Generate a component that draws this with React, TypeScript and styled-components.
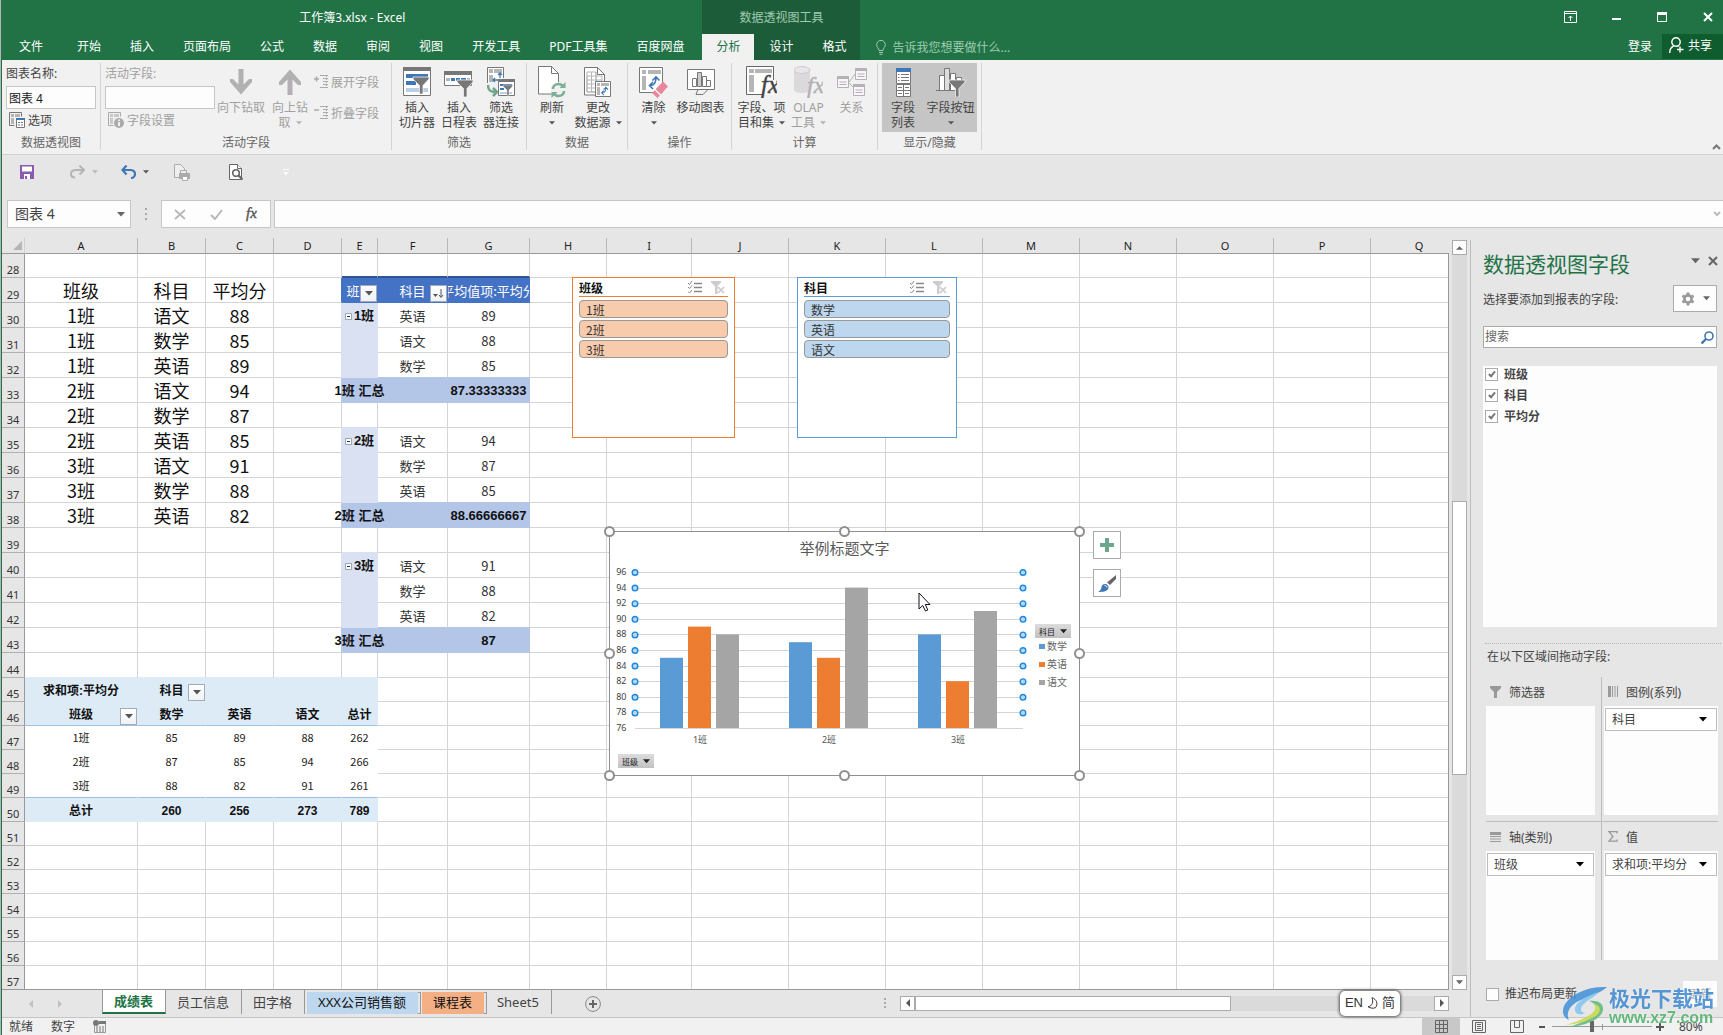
import React from 'react';
import styled, { createGlobalStyle, css } from 'styled-components';

const UI = '"Noto Sans", "Noto Sans CJK SC", sans-serif';
const SHEET = '"Noto Sans CJK SC", sans-serif';
const GREEN = '#217346';

const Global = createGlobalStyle`
  *, *::before, *::after { box-sizing: border-box; }
  body { margin: 0; font-family: ${UI}; font-size: 12px; color: #444; background: #e6e6e6; }
  button, input, select { font: inherit; color: inherit; margin: 0; padding: 0; border: 0; background: none; border-radius: 0; outline: none; }
  button { cursor: pointer; }
  svg { display: block; flex: none; }
`;

/* ---------- frame ---------- */

const Window = styled.div`
  display: flex;
  flex-direction: column;
  height: 100vh;
  padding-left: 1px;
  border-left: 1px solid #b5b5b5;
  background: ${GREEN};
  overflow: hidden;
`;

const Header = styled.header`
  display: flex;
  height: 60px;
  flex: none;
  color: #fff;
`;

const HeaderPart = styled.div<{ $dark?: boolean; $grow?: boolean }>`
  display: flex;
  flex-direction: column;
  background: ${p => (p.$dark ? '#1d5c39' : GREEN)};
  color: ${p => (p.$dark ? '#9fcbb1' : '#fff')};
  ${p => p.$grow && 'flex: 1;'}
`;

const TitleRow = styled.div<{ $end?: boolean }>`
  display: flex;
  align-items: center;
  justify-content: ${p => (p.$end ? 'flex-end' : 'center')};
  gap: 16px;
  height: 34px;
`;

const WinButton = styled.button`
  display: flex;
  align-items: center;
  justify-content: center;
  width: 30px;
  height: 30px;
`;

const TabRow = styled.nav<{ $pad?: string }>`
  display: flex;
  gap: 1px;
  height: 26px;
  padding: ${p => p.$pad || '0'};
`;

const Tab = styled.button<{ $on?: boolean; $file?: boolean }>`
  padding: 0 14px;
  line-height: 24px;
  height: 26px;
  white-space: nowrap;
  color: ${p => (p.$on ? GREEN : '#fff')};
  background: ${p => (p.$on ? '#f1f1f1' : 'transparent')};
  margin-right: ${p => (p.$file ? '5px' : '0')};
`;

const SignIn = styled.button`
  height: 26px;
  padding: 0 9px;
  line-height: 24px;
`;

const TellMe = styled.button`
  display: flex;
  align-items: center;
  gap: 6px;
  height: 26px;
  color: #9fcbb1;
`;

const Share = styled.button`
  display: flex;
  align-items: center;
  gap: 4px;
  width: 61px;
  height: 25px;
  padding: 0 0 3px 7px;
  background: #0f5c2f;
`;

const Push = styled.div`
  flex: 1;
`;

/* ---------- ribbon ---------- */

const Ribbon = styled.section`
  position: relative;
  display: flex;
  flex: none;
  height: 95px;
  padding: 3px 0 4px;
  background: #f1f1f1;
  border-bottom: 1px solid #d2d2d2;
`;

const GroupBox = styled.div<{ $w: number }>`
  display: flex;
  flex-direction: column;
  width: ${p => p.$w}px;
  border-right: 1px solid #d4d4d4;
`;

const GroupBody = styled.div<{ $start?: boolean }>`
  display: flex;
  justify-content: ${p => (p.$start ? 'flex-start' : 'center')};
  padding-left: ${p => (p.$start ? '4px' : '0')};
  height: 74px;
`;

const GroupLabel = styled.div`
  text-align: center;
  line-height: 14px;
  color: #666;
`;

const BigBtn = styled.button<{ $w: number; $sel?: boolean; $off?: boolean }>`
  display: flex;
  flex-direction: column;
  align-items: center;
  width: ${p => p.$w}px;
  height: 69px;
  padding-top: 4px;
  background: ${p => (p.$sel ? '#c5c5c5' : 'transparent')};
  color: ${p => (p.$off ? '#a0a0a0' : '#444')};
  line-height: 15px;
  white-space: nowrap;
`;

const IconSlot = styled.span`
  display: flex;
  align-items: center;
  justify-content: center;
  height: 30px;
  margin-bottom: 3px;
`;

const Line = styled.span`
  display: flex;
  align-items: center;
  gap: 5px;
  height: 15px;
`;

const FieldCol = styled.div<{ $w: number; $off?: boolean }>`
  display: flex;
  flex-direction: column;
  width: ${p => p.$w}px;
  color: ${p => (p.$off ? '#a0a0a0' : '#444')};
  label { line-height: 21px; }
  input {
    width: 100%;
    height: 23px;
    margin-top: 2px;
    padding-left: 2px;
    border: 1px solid #c6c6c6;
    background: #fdfdfd;
    color: #222;
  }
`;

const SmallBtn = styled.button<{ $off?: boolean }>`
  display: flex;
  align-items: center;
  gap: 3px;
  height: 22px;
  padding-left: 3px;
  color: ${p => (p.$off ? '#a0a0a0' : '#444')};
`;

const SmallCol = styled.div`
  display: flex;
  flex-direction: column;
  gap: 9px;
  padding: 8px 0 0 1px;
  button { padding-left: 0; }
`;

const Collapse = styled.button`
  position: absolute;
  right: 2px;
  bottom: 3px;
`;

/* ---------- quick access and formula bar ---------- */

const Quick = styled.div`
  display: grid;
  grid-template-columns: 50px 51px 54px 54px 50px 20px;
  align-items: center;
  flex: none;
  height: 45px;
  padding: 0 0 11px 15px;
  background: #e6e6e6;
`;

const QuickItem = styled.div`
  display: flex;
  gap: 2px;
`;

const IconBtn = styled.button<{ $w?: number }>`
  display: flex;
  align-items: center;
  justify-content: center;
  width: ${p => p.$w || 20}px;
  height: 20px;
`;

const FormulaRow = styled.div`
  display: flex;
  flex: none;
  height: 28px;
  padding-left: 5px;
  background: #e6e6e6;
`;

const Boxed = styled.div<{ $w?: number }>`
  position: relative;
  display: flex;
  align-items: center;
  width: ${p => (p.$w ? `${p.$w}px` : 'auto')};
  flex: ${p => (p.$w ? 'none' : '1')};
  border: 1px solid #c6c6c6;
  background: #fdfdfd;
  input { width: 100%; height: 100%; padding: 0 0 2px 7px; font-size: 14px; }
`;

const FormulaBox = styled(Boxed)`
  margin-left: 3px;
  border-right: 0;
`;

const CaretOver = styled.span<{ $right: number }>`
  position: absolute;
  right: ${p => p.$right}px;
  top: 0;
  bottom: 0;
  display: flex;
  align-items: center;
  pointer-events: none;
`;

const Dots = styled.div`
  display: flex;
  align-items: center;
  justify-content: center;
  width: 30px;
`;

/* ---------- body ---------- */

const Body = styled.div`
  display: flex;
  flex: 1;
  min-height: 0;
  background: #e6e6e6;
`;

const Left = styled.div`
  display: flex;
  flex-direction: column;
  flex: 1;
  min-width: 0;
`;

const SheetRow = styled.div`
  display: flex;
  flex: 1;
  min-height: 0;
`;

const SheetView = styled.main`
  position: relative;
  flex: 1;
  min-width: 0;
  overflow: hidden;
  font-family: ${SHEET};
  border-bottom: 1px solid #999;
  &::after {
    content: '';
    position: absolute;
    right: 0;
    top: 25px;
    bottom: 0;
    width: 1px;
    background: #999;
  }
`;

const Grid = styled.table<{ $w: number }>`
  table-layout: fixed;
  width: ${p => p.$w}px;
  margin-top: 10px;
  border-collapse: separate;
  border-spacing: 0;
  td, th { padding: 0; }
`;

const ColHead = styled.th`
  height: 16px;
  font-size: 11px;
  line-height: 15px;
  font-weight: 400;
  color: #222;
  border-bottom: 1px solid #999;
  border-right: 1px solid #b8b8b8;
  font-family: ${UI};
`;

const Corner = styled(ColHead)`
  border-right-color: #d0d0d0;
  svg { margin-left: 11px; }
`;

const RowHead = styled.th<{ $h: number }>`
  height: ${p => p.$h}px;
  vertical-align: bottom;
  text-align: center;
  font-family: ${UI};
  font-size: 11px;
  font-weight: 400;
  line-height: 14px;
  color: #333;
  background: #e6e6e6;
  border-bottom: 1px solid #b0b0b0;
  border-right: 1px solid #999;
`;

const Cell = styled.td<{ $bg: string; $r: string; $b: string; $bw: number }>`
  position: relative;
  background: ${p => p.$bg};
  border-right: 1px solid ${p => p.$r};
  border-bottom: ${p => p.$bw}px solid ${p => p.$b};
`;

type TextKind = 'big' | 'mid' | 'midBold' | 'small' | 'smallBold' | 'head';

const kinds: Record<TextKind, ReturnType<typeof css>> = {
  big: css`font-size: 18px; color: #111;`,
  mid: css`padding-top: 2px; font-size: 13px; color: #333;`,
  midBold: css`padding-top: 2px; font-family: "Liberation Sans", "Noto Sans CJK SC", sans-serif; font-size: 13px; font-weight: 700; color: #111;`,
  small: css`padding-bottom: 2px; font-size: 11px; color: #222;`,
  smallBold: css`padding-top: 2px; font-family: "Liberation Sans", "Noto Sans CJK SC", sans-serif; font-size: 12px; font-weight: 700; color: #111;`,
  head: css`padding-top: 2px; font-size: 13px; color: #fff;`,
};

const CellText = styled.div<{ $kind: TextKind; $clip?: boolean }>`
  position: relative;
  z-index: 1;
  display: flex;
  align-items: center;
  justify-content: center;
  gap: 2px;
  height: 22px;
  line-height: 20px;
  white-space: nowrap;
  overflow: ${p => (p.$clip ? 'hidden' : 'visible')};
  ${p => kinds[p.$kind]}
`;

const FilterBtn = styled.button`
  position: absolute;
  z-index: 2;
  right: 0;
  bottom: 0;
  display: flex;
  align-items: center;
  justify-content: center;
  width: 17px;
  height: 17px;
  border: 1px solid #a3abb8;
  background: linear-gradient(#fff, #f0f2f5);
`;

/* ---------- floating objects ---------- */

const Slicer = styled.section<{ $x: number; $w: number; $c: string }>`
  position: absolute;
  z-index: 3;
  left: ${p => p.$x}px;
  top: 49px;
  width: ${p => p.$w}px;
  height: 161px;
  padding: 0 6px;
  border: 1px solid ${p => p.$c};
  background: #fff;
`;

const SlicerHead = styled.div<{ $c: string }>`
  display: flex;
  align-items: center;
  height: 19px;
  margin-bottom: 3px;
  font-size: 12px;
  font-weight: 700;
  color: #111;
  border-bottom: 1px solid ${p => p.$c};
  span { flex: 1; }
`;

const SlicerItem = styled.button<{ $bg: string }>`
  display: block;
  width: 100%;
  height: 18px;
  margin-bottom: 2px;
  padding-left: 6px;
  text-align: left;
  line-height: 15px;
  color: #333;
  background: ${p => p.$bg};
  border: 1px solid #999;
  border-radius: 4px;
`;

const ChartFrame = styled.section`
  position: absolute;
  z-index: 3;
  left: 607px;
  top: 303px;
  width: 471px;
  height: 245px;
  border: 1px solid #8f8f8f;
  background: #fff;
  font-family: ${UI};
`;

const ChartSvg = styled.svg`
  position: absolute;
  left: -1px;
  top: -1px;
  overflow: visible;
`;

const ChartTitle = styled.h2`
  margin: 7px 0 0;
  font-size: 15px;
  line-height: 18px;
  font-weight: 400;
  text-align: center;
  color: #595959;
`;

const FieldBtn = styled.button<{ $x: number; $y: number }>`
  position: absolute;
  left: ${p => p.$x}px;
  top: ${p => p.$y}px;
  display: flex;
  align-items: center;
  justify-content: space-between;
  width: 36px;
  height: 14px;
  padding: 0 4px;
  font-size: 8px;
  color: #222;
  background: linear-gradient(#dcdcdc, #c2c2c2);
`;

const ChartTool = styled.button<{ $y: number }>`
  position: absolute;
  z-index: 3;
  left: 1091px;
  top: ${p => p.$y}px;
  display: flex;
  align-items: center;
  justify-content: center;
  width: 28px;
  height: 28px;
  background: #fff;
  border: 1px solid #ababab;
`;

const Pointer = styled.svg`
  position: absolute;
  z-index: 4;
  left: 916px;
  top: 364px;
`;

/* ---------- scroll bars ---------- */

const VScroll = styled.div`
  display: flex;
  flex-direction: column;
  width: 15px;
  margin: 12px 3px 0;
  background: #dadada;
`;

const ScrollBtn = styled.button`
  display: flex;
  align-items: center;
  justify-content: center;
  flex: none;
  width: 15px;
  height: 15px;
  background: #fdfdfd;
  border: 1px solid #ababab;
`;

const Span = styled.div<{ $n: number; $thumb?: boolean }>`
  flex: ${p => p.$n};
  ${p => p.$thumb && 'background: #fff; border: 1px solid #ababab;'}
`;

const HScroll = styled.div`
  position: relative;
  display: flex;
  width: 549px;
  height: 15px;
  margin-right: 21px;
  background: #dadada;
`;

const Ime = styled.div`
  position: absolute;
  right: 49px;
  top: -5px;
  display: flex;
  align-items: center;
  justify-content: center;
  gap: 4px;
  width: 60px;
  height: 25px;
  font-family: "Liberation Sans", "Noto Sans CJK SC", sans-serif;
  font-size: 13px;
  line-height: 16px;
  color: #333;
  background: #fff;
  border-radius: 5px;
  box-shadow: 0 0 3px 1px #555;
`;

/* ---------- sheet tabs and status bar ---------- */

const TabBar = styled.div`
  display: flex;
  flex: none;
  height: 27px;
  font-size: 13px;
`;

const TabNav = styled.div`
  display: flex;
  align-items: center;
  gap: 9px;
  width: 100px;
  padding-left: 19px;
`;

const SheetTab = styled.button<{ $on?: boolean; $bg?: string }>`
  height: 24px;
  padding: 0 12px 1px 11px;
  line-height: 20px;
  white-space: nowrap;
  color: #444;
  border-right: 1px solid #999;
  ${p => p.$bg && css`
    height: 22px;
    margin: 2px 2px 0 2px;
    line-height: 17px;
    color: #111;
    background: ${p.$bg};
    border-right: 0;
    box-shadow: 3px 0 0 -1px #e6e6e6, 3px 0 0 0 #999;
  `}
  ${p => p.$on && css`
    color: ${GREEN};
    font-weight: 700;
    background: #fff;
    border-left: 1px solid #999;
    border-bottom: 2px solid ${GREEN};
  `}
`;

const AddTab = styled.button`
  margin-left: 33px;
`;

const ScrollArea = styled.div`
  display: flex;
  align-items: center;
  height: 26px;
`;

const Status = styled.footer`
  display: flex;
  align-items: center;
  flex: none;
  height: 18px;
  padding-left: 7px;
  background: #f1f1f1;
  border-top: 1px solid #c6c6c6;
  line-height: 16px;
`;

const StatusText = styled.span`
  margin-right: 18px;
`;

const ViewBtn = styled.button<{ $on?: boolean }>`
  display: flex;
  align-items: center;
  justify-content: center;
  width: 38px;
  height: 17px;
  background: ${p => (p.$on ? '#c8c8c8' : 'transparent')};
`;

const Zoom = styled.input`
  appearance: none;
  width: 100px;
  height: 12px;
  margin: 0 4px;
  background: linear-gradient(#999, #999) 0 50% / 100% 1px no-repeat, linear-gradient(#999, #999) 50% 50% / 1px 6px no-repeat;
  &::-webkit-slider-thumb {
    appearance: none;
    width: 4px;
    height: 11px;
    background: #666;
  }
`;

const Percent = styled.span`
  width: 59px;
  padding-left: 15px;
`;

/* ---------- field pane ---------- */

const Pane = styled.aside`
  display: flex;
  flex-direction: column;
  width: 253px;
  margin-top: 12px;
  padding: 11px 6px 10px 12px;
  border-left: 1px solid #bdbdbd;
`;

const PaneTop = styled.div`
  display: flex;
  align-items: flex-start;
  gap: 8px;
  height: 27px;
  margin-right: -1px;
  h2 { flex: 1; margin: 0; font-size: 21px; line-height: 26px; font-weight: 400; color: ${GREEN}; white-space: nowrap; }
`;

const PaneRow = styled.div`
  display: flex;
  align-items: center;
  justify-content: space-between;
  height: 27px;
  margin-top: 7px;
`;

const GearBtn = styled.button`
  display: flex;
  align-items: center;
  justify-content: center;
  gap: 8px;
  width: 44px;
  height: 27px;
  border: 1px solid #ababab;
  background: #fdfdfd;
`;

const Search = styled.label`
  display: flex;
  align-items: center;
  height: 22px;
  margin-top: 14px;
  padding-right: 2px;
  border: 1px solid #ababab;
  background: #fff;
  input { flex: 1; min-width: 0; height: 20px; padding: 0 0 2px 1px; }
  input::placeholder { color: #666; opacity: 1; }
`;

const FieldList = styled.div`
  flex: 1;
  min-height: 70px;
  margin-top: 18px;
  padding: 0 2px;
  background: #fdfdfd;
`;

const Check = styled.label<{ $bold?: boolean }>`
  display: flex;
  align-items: center;
  gap: 6px;
  height: ${p => (p.$bold ? '21px' : '26px')};
  padding-bottom: ${p => (p.$bold ? '4px' : '0')};
  font-weight: ${p => (p.$bold ? 700 : 400)};
  line-height: 16px;
  input {
    appearance: none;
    position: relative;
    width: 13px;
    height: 13px;
    background: #fdfdfd;
    border: 1px solid #ababab;
  }
  input:checked::after {
    content: '';
    position: absolute;
    left: 4px;
    top: 1px;
    width: 4px;
    height: 7px;
    border: solid #777;
    border-width: 0 2px 2px 0;
    transform: rotate(40deg);
  }
`;

const DragLabel = styled.div`
  margin: 16px -4px 0 2px;
  padding: 4px 0 0 2px;
  height: 34px;
  line-height: 18px;
  border-top: 1px dotted #b5b5b5;
`;

const Zones = styled.div`
  display: grid;
  grid-template-columns: 1fr 1fr;
  margin: 0 -1px 0 3px;
`;

const Zone = styled.section<{ $right?: boolean; $last?: boolean }>`
  padding: ${p => (p.$right ? '0 0 0 2px' : '0 6px 0 0')};
  padding-bottom: ${p => (p.$last ? '0' : '6px')};
  border-right: ${p => (p.$right ? '0' : '1px solid #bdbdbd')};
  border-bottom: ${p => (p.$last ? '0' : '1px solid #bdbdbd')};
`;

const ZoneHead = styled.div`
  display: flex;
  align-items: center;
  gap: 8px;
  height: 29px;
  padding-left: 4px;
`;

const ZoneBox = styled.div`
  height: 109px;
  padding: 2px 1px;
  background: #fdfdfd;
`;

const Pick = styled.div`
  position: relative;
  height: 23px;
  border: 1px solid #bdbdbd;
  background: #fff;
  select { appearance: none; width: 100%; height: 21px; padding-left: 6px; line-height: 21px; }
`;

const PaneFoot = styled.div`
  display: flex;
  align-items: center;
  justify-content: space-between;
  height: 26px;
  margin: 21px 0 0 3px;
`;

const UpdateBtn = styled.button`
  width: 34px;
  height: 26px;
  color: #b0b0b0;
  background: #fdfdfd;
`;

const Watermark = styled.div`
  position: fixed;
  right: 9px;
  bottom: 7px;
  display: flex;
  align-items: center;
  gap: 2px;
  pointer-events: none;
  opacity: 0.85;
`;

const MarkText = styled.div`
  font-weight: 700;
  text-shadow: 0 0 2px #fff;
  white-space: nowrap;
  div { font-size: 21px; line-height: 22px; color: #3c86cf; }
  p { margin: 0; font-family: "Liberation Sans", sans-serif; font-size: 16px; line-height: 18px; color: #4caf6a; }
`;

/* ---------- icons ---------- */

const Caret = ({ c = '#666', w = 6 }: { c?: string; w?: number }) => (
  <svg width={w} height={Math.ceil(w / 2) + 1} viewBox="0 0 8 5"><path d="M0 0h8L4 4.6z" fill={c} /></svg>
);

const Arrow = ({ up }: { up?: boolean }) => (
  <svg width="22" height="26" viewBox="0 0 22 26">
    <path transform={up ? 'rotate(180 11 13)' : undefined} d="M8.5 0h5v15.5l5.5-5.5h3v3L11 25.500 0 13v-3h3l5.500 5.500z" fill="#b3b0b3" />
  </svg>
);

const TreeIcon = ({ plus }: { plus?: boolean }) => (
  <svg width="14" height="14" viewBox="0 0 14 14" stroke="#aaa" fill="none">
    <path d={plus ? 'M0 4h5M2.500 1.500v5' : 'M0 4h5'} strokeWidth="1.500" />
    <path d="M6 .5h8M9 3.500h5M9 6.500h5M9 9.500h5M6 12.500h8" />
    <path d="M12.500 1v12" strokeDasharray="1 2" />
  </svg>
);

const OptionsIcon = ({ info }: { info?: boolean }) => (
  <svg width="16" height="16" viewBox="0 0 16 16" fill="none">
    <path d="M.5.500h12v4M.5.500v13h5" stroke={info ? '#aaa' : '#777'} />
    <path d="M2 2h3v3H2zM6 2h5v3H6zM2 6h3v6H2z" fill={info ? '#c8c8c8' : '#b5b5b5'} />
    {info ? (
      <>
        <circle cx="11" cy="11" r="5" fill="#aaa" />
        <path d="M11 7.500v1.500M11 10v4" stroke="#fff" strokeWidth="1.600" />
      </>
    ) : (
      <>
        <path d="M7.500 6.500h8v9h-8z" fill="#fff" stroke="#777" />
        <path d="M7 6h9v2H7z" fill="#3f76b5" />
        <path d="M9 10.500h2M12 10.500h2M9 13h2M12 13h2" stroke="#777" />
      </>
    )}
  </svg>
);

const Funnel = ({ x = 0, y = 0, c = '#777', k = 1 }: { x?: number; y?: number; c?: string; k?: number }) => (
  <path transform={`translate(${x} ${y}) scale(${k})`} d="M0 0h16v2L10 8.500V17H6.500V8.500L0 2z" fill={c} stroke="#f1f1f1" strokeWidth=".8" />
);

const SlicerIcon = () => (
  <svg width="28" height="30" viewBox="0 0 28 30">
    <path d="M.5.500h27v28H.5z" fill="#fff" stroke="#777" />
    <path d="M0 0h28v4H0z" fill="#777" />
    <path d="M3 7h22v4H3zM3 14h10v4H3z" fill="#3f76b5" />
    <path d="M3 21h22v4H3z" fill="#b9cfe8" />
    <Funnel x={10} y={10} />
  </svg>
);

const TimelineIcon = () => (
  <svg width="30" height="30" viewBox="0 0 30 30">
    <path d="M.5 4.500h27v14H.5z" fill="#fff" stroke="#777" />
    <path d="M0 4h28v4H0z" fill="#777" />
    <path d="M2 11h4v3H2zM23 11h3v3h-3z" fill="#b5b5b5" />
    <path d="M7 11h4v3H7zM12 11h4v3h-4zM17 11h5v3h-5z" fill="#3f76b5" />
    <Funnel x={13} y={13} />
  </svg>
);

const LinkIcon = () => (
  <svg width="28" height="30" viewBox="0 0 28 30" fill="none">
    <path d="M.5 16V.500h16V11" fill="#fff" stroke="#777" />
    <path d="M2 2h4v4H2zM7 2h8v4H7zM2 8h4v7H2z" fill="#b5b5b5" />
    <path d="M13 6v5M11 8l2-2 2 2M6 13h5M8 11l-2 2 2 2" stroke="#3f76b5" strokeWidth="1.300" />
    <path d="M1 18c0 5 2 7 7 7M6 21l4 4-4 4" stroke="#6fa58d" strokeWidth="2.500" />
    <path d="M11.500 12.500h16v16h-16z" fill="#fff" stroke="#777" />
    <path d="M11 12h17v3H11z" fill="#777" />
    <path d="M13 17h12v2H13zM13 21h4v2h-4z" fill="#3f76b5" />
    <path d="M13 25h12v2H13z" fill="#b9cfe8" />
    <Funnel x={16} y={18} k={0.6} />
  </svg>
);

const RefreshIcon = () => (
  <svg width="28" height="32" viewBox="0 0 28 32" fill="none">
    <path d="M.5.500h13l7 7V28H.5z" fill="#fff" stroke="#777" />
    <path d="M13.500.500v7h7" stroke="#777" />
    <circle cx="20.500" cy="24" r="8" fill="#f1f1f1" />
    <path d="M15 23c0-3 2.500-5 5.500-5 2 0 3.500 1 4.500 2.500M26 25c0 3-2.500 5-5.500 5-2 0-3.500-1-4.500-2.500" stroke="#7caf97" strokeWidth="2.600" />
    <path d="M27.500 16v6h-6zM13.500 32v-6h6z" fill="#7caf97" />
  </svg>
);

const SwapArrows = ({ x, y, k = 1 }: { x: number; y: number; k?: number }) => (
  <path transform={`translate(${x} ${y}) scale(${k})`} d="M3 10.500c4 0 6-2 6-8M6 7L2.500 10.500 6 14M5.500 5.500L9 2l3.500 3.500" fill="none" stroke="#3f76b5" strokeWidth="1.600" />
);

const SourceIcon = () => (
  <svg width="28" height="31" viewBox="0 0 28 31" fill="none">
    <path d="M.5.500h13l7 7V28H.5z" fill="#fff" stroke="#777" />
    <path d="M13.500.500v7h7" stroke="#777" />
    <path d="M3 5h9v20H3zM3 9h15v16H3zM3 13h15M3 17h15M3 21h15M7.500 5v20M12 5v20" stroke="#b5b5b5" />
    <path d="M11.500 14.500h15v15h-15z" fill="#fff" stroke="#777" />
    <path d="M13 16h3v3h-3zM17 16h8v3h-8zM13 20h3v8h-3z" fill="#b5b5b5" />
    <SwapArrows x={16} y={19} k={0.65} />
  </svg>
);

const ClearIcon = () => (
  <svg width="29" height="31" viewBox="0 0 29 31">
    <path d="M.5.500h23v25H.5z" fill="#fff" stroke="#777" />
    <path d="M3 3h4v4H3zM9 3h13v4H9zM3 9h4v14H3z" fill="#b5b5b5" />
    <SwapArrows x={8} y={8} />
    <path d="M24 14.500l5 5L18.500 31l-5.500-5z" fill="#e8869a" />
    <path d="M15.500 22l6 6" stroke="#fff" strokeWidth="1.200" />
  </svg>
);

const MoveChartIcon = () => (
  <svg width="28" height="28" viewBox="0 0 28 28" fill="none">
    <path d="M.5 1.500h27v20H.500z" fill="#fff" stroke="#777" />
    <path d="M5.500 10.500h4v8h-4zM15.500 8.500h4v10h-4zM19.500 12.500h4v6h-4z" fill="#fff" stroke="#777" />
    <path d="M10.500 4.500h4v14h-4z" fill="#ccc" stroke="#777" />
    <path d="M11 21.500l-2 5h7l5-5z" fill="#f1f1f1" stroke="#777" />
  </svg>
);

const Fx = ({ x, y, size, c }: { x: number; y: number; size: number; c: string }) => (
  <text x={x} y={y} fontFamily="Liberation Serif, serif" fontStyle="italic" fontSize={size} fill={c} stroke={c} strokeWidth=".4">fx</text>
);

const CalcIcon = () => (
  <svg width="31" height="32" viewBox="0 0 31 32">
    <path d="M.5.500h27v28H.5z" fill="#fff" stroke="#666" />
    <path d="M3 3h5v4H3zM9 3h17v4H9zM3 9h5v17H3z" fill="#b5b5b5" />
    <path d="M17 14h14v15H17z" fill="#f8f8f8" />
    <Fx x={15} y={27} size={25} c="#444" />
  </svg>
);

const OlapIcon = () => (
  <svg width="29" height="32" viewBox="0 0 29 32">
    <path d="M0 4v20c0 4 16 4 16 0V4z" fill="#dcd9dc" />
    <ellipse cx="8" cy="4" rx="8" ry="3.500" fill="#e8e6e8" stroke="#cfcccf" />
    <Fx x={13} y={27} size={24} c="#b3b0b3" />
  </svg>
);

const RelIcon = () => (
  <svg width="30" height="30" viewBox="0 0 30 30" fill="#faf5fb" stroke="#b5b2b5">
    <path d="M12 15l7-9M12 16l5 5" fill="none" />
    {[[0.5, 9.5], [18.5, 1.5], [16.5, 17.5]].map(([x, y]) => (
      <g key={x}>
        <path d={`M${x} ${y}h11v11h-11z`} />
        <path d={`M${x} ${y + 1}h11`} strokeWidth="3" />
        <path d={`M${x + 2} ${y + 5.500}h7M${x + 2} ${y + 8}h7`} />
      </g>
    ))}
  </svg>
);

const ListIcon = () => (
  <svg width="15" height="29" viewBox="0 0 15 29" fill="#fff" stroke="#777">
    <path d="M.5.500h14v15H.5zM.5 16.500h14v12H.5z" />
    <path d="M7.500 17v11M1 22.500h13M2 19.500h4M9 19.500h4M2 25.500h4M9 25.500h4M5 6.500h8M5 9.500h8M5 12.500h8M2 6.500h1.500M2 9.500h1.500M2 12.500h1.500" />
    <path d="M0 0h15v4H0z" fill="#3f76b5" stroke="none" />
  </svg>
);

const FieldBtnIcon = () => (
  <svg width="30" height="30" viewBox="0 0 30 30" fill="#fff" stroke="#777">
    <path d="M0 23.500h22M3.500 8.500h5v15h-5zM14.500 6.500h5v17h-5zM20.500 10.500h5v5h-5z" />
    <path d="M8.500 1.500h5v22h-5z" fill="#ddd" />
    <Funnel x={13} y={13} />
  </svg>
);

/* ---------- data ---------- */

const tabs = ['文件', '开始', '插入', '页面布局', '公式', '数据', '审阅', '视图', '开发工具', 'PDF工具集', '百度网盘'];

const columns: [string, number][] = [
  ['A', 113], ['B', 68], ['C', 68], ['D', 68], ['E', 36], ['F', 70], ['G', 82], ['H', 77], ['I', 85],
  ['J', 97], ['K', 97], ['L', 97], ['M', 97], ['N', 97], ['O', 97], ['P', 97], ['Q', 97],
];
const HEAD_WIDTH = 23;
const gridWidth = columns.reduce((sum, [, w]) => sum + w, HEAD_WIDTH);

const rowNumbers = Array.from({ length: 30 }, (_, i) => 28 + i);
const rowHeight = (r: number) => (r === 28 || r > 44 ? 24 : 25);

type CellData = { t: string; k: TextKind; filter?: 'down' | 'sort'; toggle?: boolean; clip?: boolean };
const cells: Record<string, CellData> = {};

[['班级', '科目', '平均分'], ['1班', '语文', '88'], ['1班', '数学', '85'], ['1班', '英语', '89'], ['2班', '语文', '94'],
  ['2班', '数学', '87'], ['2班', '英语', '85'], ['3班', '语文', '91'], ['3班', '数学', '88'], ['3班', '英语', '82']]
  .forEach((row, i) => row.forEach((t, j) => { cells['ABC'[j] + (29 + i)] = { t, k: 'big' }; }));

cells.E29 = { t: '班级', k: 'head', filter: 'down' };
cells.F29 = { t: '科目', k: 'head', filter: 'sort' };
cells.G29 = { t: '平均值项:平均分', k: 'head', clip: true };

const groups: [number, string, [string, string][], string][] = [
  [30, '1班', [['英语', '89'], ['语文', '88'], ['数学', '85']], '87.33333333'],
  [35, '2班', [['语文', '94'], ['数学', '87'], ['英语', '85']], '88.66666667'],
  [40, '3班', [['语文', '91'], ['数学', '88'], ['英语', '82']], '87'],
];
groups.forEach(([start, name, rows, total]) => {
  cells['E' + start] = { t: name, k: 'midBold', toggle: true };
  rows.forEach(([s, v], i) => {
    cells['F' + (start + i)] = { t: s, k: 'mid' };
    cells['G' + (start + i)] = { t: v, k: 'mid' };
  });
  cells['E' + (start + 3)] = { t: `${name} 汇总`, k: 'midBold' };
  cells['G' + (start + 3)] = { t: total, k: 'midBold' };
});

cells.A45 = { t: '求和项:平均分', k: 'smallBold' };
cells.B45 = { t: '科目', k: 'smallBold', filter: 'down' };
['班级', '数学', '英语', '语文', '总计'].forEach((t, j) => { cells['ABCDE'[j] + 46] = { t, k: 'smallBold' }; });
cells.A46.filter = 'down';
[['1班', '85', '89', '88', '262'], ['2班', '87', '85', '94', '266'], ['3班', '88', '82', '91', '261']]
  .forEach((row, i) => row.forEach((t, j) => { cells['ABCDE'[j] + (47 + i)] = { t, k: 'small' }; }));
['总计', '260', '256', '273', '789'].forEach((t, j) => { cells['ABCDE'[j] + 50] = { t, k: 'smallBold' }; });

function fillOf(r: number, c: number): string | undefined {
  if (c >= 4 && c <= 6) {
    if (r === 29) return '#4472c4';
    if (r === 33 || r === 38 || r === 43) return '#b4c6e7';
  }
  if (c === 4 && r >= 30 && r <= 42 && r !== 34 && r !== 39) return '#d9e1f2';
  if (c <= 4) {
    if (r === 45 || r === 46 || r === 50) return '#ddebf7';
    if (r >= 47 && r <= 49) return '#ffffff';
  }
  return undefined;
}

const GRIDLINE = '#d4d4d4';

function bottomOf(r: number, c: number): [string, number] {
  if (r === 28 && c >= 4 && c <= 6) return ['#2f5597', 2];
  if ((r === 46 || r === 49) && c <= 4) return ['#9bc2e6', 1];
  return [fillOf(r, c) || fillOf(r + 1, c) || GRIDLINE, 1];
}

function SheetGrid() {
  return (
    <Grid $w={gridWidth}>
      <colgroup>
        <col style={{ width: HEAD_WIDTH }} />
        {columns.map(([n, w]) => <col key={n} style={{ width: w }} />)}
      </colgroup>
      <thead>
        <tr>
          <Corner><svg width="9" height="9" viewBox="0 0 9 9"><path d="M9 0v9H0z" fill="#b5b5b5" /></svg></Corner>
          {columns.map(([n]) => <ColHead key={n} scope="col">{n}</ColHead>)}
        </tr>
      </thead>
      <tbody>
        {rowNumbers.map(r => (
          <tr key={r}>
            <RowHead scope="row" $h={rowHeight(r)}>{r}</RowHead>
            {columns.map(([n], c) => {
              const d = cells[n + r];
              const [b, bw] = bottomOf(r, c);
              return (
                <Cell key={n} $bg={fillOf(r, c) || '#fff'} $r={fillOf(r, c) || fillOf(r, c + 1) || GRIDLINE} $b={b} $bw={bw}>
                  {d && (
                    <CellText $kind={d.k} $clip={d.clip}>
                      {d.toggle && (
                        <svg width="7" height="7" viewBox="0 0 7 7"><path d="M.5.500h6v6h-6z" fill="#fff" stroke="#9aa5b8" /><path d="M2 3.500h3" stroke="#333" /></svg>
                      )}
                      {d.t}
                    </CellText>
                  )}
                  {d?.filter && (
                    <FilterBtn aria-label={`筛选${d.t}`}>
                      {d.filter === 'down' ? <Caret c="#555" w={8} /> : (
                        <svg width="11" height="10" viewBox="0 0 11 10"><path d="M0 5h5L2.500 8z" fill="#555" /><path d="M8 0v8M6 6l2 2.500L10 6" stroke="#555" fill="none" /></svg>
                      )}
                    </FilterBtn>
                  )}
                </Cell>
              );
            })}
          </tr>
        ))}
      </tbody>
    </Grid>
  );
}

function SlicerBox({ title, items, x, w, line, fill }: { title: string; items: string[]; x: number; w: number; line: string; fill: string }) {
  return (
    <Slicer $x={x} $w={w} $c={line}>
      <SlicerHead $c={line}>
        <span>{title}</span>
        <IconBtn aria-label="多选" $w={27}>
          <svg width="14" height="13" viewBox="0 0 14 13" fill="none" stroke="#888">
            <path d="M6 2.500h8M6 6.500h8M6 10.500h8" strokeWidth="1.300" />
            <path d="M0 2l1.500 1.500L4 0M0 6l1.500 1.500L4 4.500M0 10.500L1.500 12 4 9" />
          </svg>
        </IconBtn>
        <IconBtn aria-label="清除筛选器">
          <svg width="14" height="13" viewBox="0 0 14 13">
            <path d="M0 0h10v1.500L6.500 5v8H4V5L0 1.500z" fill="#cfcacf" />
            <path d="M7 6l6 6M13 6l-6 6" stroke="#cfcacf" strokeWidth="1.700" />
          </svg>
        </IconBtn>
      </SlicerHead>
      {items.map(t => <SlicerItem key={t} $bg={fill}>{t}</SlicerItem>)}
    </Slicer>
  );
}

const series = [
  { name: '数学', color: '#5b9bd5', values: [85, 87, 88] },
  { name: '英语', color: '#ed7d31', values: [89, 85, 82] },
  { name: '语文', color: '#a5a5a5', values: [88, 94, 91] },
];

function Chart() {
  const y = (v: number) => 197 - (v - 76) * 7.8;
  const ticks = Array.from({ length: 11 }, (_, i) => 96 - 2 * i);
  return (
    <ChartFrame>
      <ChartTitle>举例标题文字</ChartTitle>
      <ChartSvg width="471" height="245" viewBox="0 0 471 245" fontFamily={UI} fill="#555">
        {ticks.map(v => (
          <g key={v}>
            <path d={`M26 ${Math.round(y(v)) + 0.5}h388`} stroke="#d4d4d4" />
            <text x="17.500" y={y(v) + 3} textAnchor="end" fontSize="9" fill="#444">{v}</text>
          </g>
        ))}
        {series.map((s, j) => s.values.map((v, i) => (
          <rect key={s.name + i} x={51 + 129 * i + 28 * j} y={y(v)} width="23" height={y(76) - y(v)} fill={s.color} />
        )))}
        {ticks.slice(0, 10).map(v => [26, 414].map(x => (
          <circle key={`${v}-${x}`} cx={x} cy={y(v) + 0.5} r="2.800" fill="#b4d8f5" stroke="#1e88dd" strokeWidth="1.400" />
        )))}
        {['1班', '2班', '3班'].map((t, i) => <text key={t} x={91 + 129 * i} y="212" textAnchor="middle" fontSize="9">{t}</text>)}
        {series.map((s, i) => (
          <g key={s.name}>
            <rect x="430" y={113 + 18 * i} width="6" height="5" fill={s.color} />
            <text x="438" y={119 + 18 * i} fontSize="10" fill="#666">{s.name}</text>
          </g>
        ))}
        {[0.5, 235.5, 470.5].map(x => [0.5, 122.5, 244.5].filter(h => !(x === 235.5 && h === 122.5)).map(h => (
          <circle key={`${x}-${h}`} cx={x} cy={h} r="4.500" fill="#fff" stroke="#8f8f8f" strokeWidth="2" />
        )))}
      </ChartSvg>
      <FieldBtn $x={425} $y={92}>科目<Caret c="#222" w={7} /></FieldBtn>
      <FieldBtn $x={8} $y={222}>班级<Caret c="#222" w={7} /></FieldBtn>
    </ChartFrame>
  );
}

function Group({ label, w, start, children }: { label: string; w: number; start?: boolean; children: React.ReactNode }) {
  return (
    <GroupBox $w={w}>
      <GroupBody $start={start}>{children}</GroupBody>
      <GroupLabel>{label}</GroupLabel>
    </GroupBox>
  );
}

function Big({ icon, a, b, w, caret, off, sel }: { icon: React.ReactNode; a: string; b?: string; w: number; caret?: boolean; off?: boolean; sel?: boolean }) {
  return (
    <BigBtn $w={w} $off={off} $sel={sel} disabled={off}>
      <IconSlot>{icon}</IconSlot>
      <Line>{a}</Line>
      <Line>{b}{caret && <Caret c={off ? '#b5b5b5' : '#555'} />}</Line>
    </BigBtn>
  );
}

function ZonePart({ title, icon, value, right, last }: { title: string; icon: React.ReactNode; value?: string; right?: boolean; last?: boolean }) {
  return (
    <Zone $right={right} $last={last}>
      <ZoneHead>{icon}<span>{title}</span></ZoneHead>
      <ZoneBox>
        {value && (
          <Pick>
            <select aria-label={title}><option>{value}</option></select>
            <CaretOver $right={9}><Caret c="#000" w={8} /></CaretOver>
          </Pick>
        )}
      </ZoneBox>
    </Zone>
  );
}

export default function App() {
  return (
    <Window>
      <Global />
      <Header>
        <HeaderPart>
          <TitleRow>工作簿3.xlsx - Excel</TitleRow>
          <TabRow $pad="0 4px 0 3px">
            {tabs.map((t, i) => <Tab key={t} $file={i === 0}>{t}</Tab>)}
          </TabRow>
        </HeaderPart>
        <HeaderPart $dark>
          <TitleRow>数据透视图工具</TitleRow>
          <TabRow><Tab $on>分析</Tab><Tab>设计</Tab><Tab>格式</Tab></TabRow>
        </HeaderPart>
        <HeaderPart $grow>
          <TitleRow $end>
            <WinButton aria-label="功能区显示选项">
              <svg width="13" height="12" viewBox="0 0 13 12" fill="none" stroke="#fff"><path d="M.5.500h12v11H.5zM1 2.500h11M6.500 10V5M4.500 7l2-2 2 2" /></svg>
            </WinButton>
            <WinButton aria-label="最小化"><svg width="9" height="6" viewBox="0 0 9 6"><path d="M0 4h9v2H0z" fill="#fff" /></svg></WinButton>
            <WinButton aria-label="最大化"><svg width="10" height="10" viewBox="0 0 10 10"><path d="M.5.500h9v9h-9z" fill="none" stroke="#fff" /><path d="M0 0h10v3H0z" fill="#fff" /></svg></WinButton>
            <WinButton aria-label="关闭"><svg width="10" height="10" viewBox="0 0 10 10"><path d="M1 1l8 8M9 1L1 9" stroke="#fff" strokeWidth="2" /></svg></WinButton>
          </TitleRow>
          <TabRow $pad="0 0 0 16px">
            <TellMe>
              <svg width="10" height="15" viewBox="0 0 10 15" fill="none" stroke="#9fcbb1"><path d="M3 10.500C3 8 .7 7.500.7 4.700a4.300 4.300 0 018.600 0C9.300 7.500 7 8 7 10.500zM3 12.500h4M3.500 14.300h3" /></svg>
              告诉我您想要做什么...
            </TellMe>
            <Push />
            <SignIn>登录</SignIn>
            <Share>
              <svg width="15" height="17" viewBox="0 0 15 17" fill="none" stroke="#fff" strokeWidth="1.400"><circle cx="7" cy="5" r="4.200" /><path d="M.7 16c0-4 1.500-6 4-7M8.500 9l1 .8M11 9.500v6M8 12.500h6.500" /></svg>
              共享
            </Share>
          </TabRow>
        </HeaderPart>
      </Header>

      <Ribbon>
        <Group label="数据透视图" w={99} start>
          <FieldCol $w={90}>
            <label htmlFor="chart-name">图表名称:</label>
            <input id="chart-name" defaultValue="图表 4" />
            <SmallBtn><OptionsIcon />选项</SmallBtn>
          </FieldCol>
        </Group>
        <Group label="活动字段" w={291} start>
          <FieldCol $w={110} $off>
            <label htmlFor="active-field">活动字段:</label>
            <input id="active-field" />
            <SmallBtn $off disabled><OptionsIcon info />字段设置</SmallBtn>
          </FieldCol>
          <Big icon={<Arrow />} a="向下钻取" w={52} off />
          <Big icon={<Arrow up />} a="向上钻" b="取" caret w={46} off />
          <SmallCol>
            <SmallBtn $off disabled><TreeIcon plus />展开字段</SmallBtn>
            <SmallBtn $off disabled><TreeIcon />折叠字段</SmallBtn>
          </SmallCol>
        </Group>
        <Group label="筛选" w={135}>
          <Big icon={<SlicerIcon />} a="插入" b="切片器" w={42} />
          <Big icon={<TimelineIcon />} a="插入" b="日程表" w={42} />
          <Big icon={<LinkIcon />} a="筛选" b="器连接" w={42} />
        </Group>
        <Group label="数据" w={101}>
          <Big icon={<RefreshIcon />} a="刷新" caret w={42} />
          <Big icon={<SourceIcon />} a="更改" b="数据源" caret w={50} />
        </Group>
        <Group label="操作" w={104}>
          <Big icon={<ClearIcon />} a="清除" caret w={42} />
          <Big icon={<MoveChartIcon />} a="移动图表" w={52} />
        </Group>
        <Group label="计算" w={146}>
          <Big icon={<CalcIcon />} a="字段、项" b="目和集" caret w={52} />
          <Big icon={<OlapIcon />} a="OLAP" b="工具" caret w={42} off />
          <Big icon={<RelIcon />} a="关系" w={44} off />
        </Group>
        <Group label="显示/隐藏" w={104}>
          <Big icon={<ListIcon />} a="字段" b="列表" w={42} sel />
          <Big icon={<FieldBtnIcon />} a="字段按钮" caret w={53} sel />
        </Group>
        <Collapse aria-label="折叠功能区"><svg width="9" height="8" viewBox="0 0 9 8"><path d="M1 6l3.500-3.500L8 6" fill="none" stroke="#777" strokeWidth="2" /></svg></Collapse>
      </Ribbon>

      <Quick>
        <QuickItem>
          <IconBtn aria-label="保存">
            <svg width="14" height="14" viewBox="0 0 14 14"><path d="M0 0h14v14H0z" fill="#8a5bb0" /><path d="M2 1.500h10v5H2zM4 9h6v5H4z" fill="#fff" /><path d="M5 11h2v3H5z" fill="#8a5bb0" /></svg>
          </IconBtn>
        </QuickItem>
        <QuickItem>
          <IconBtn aria-label="恢复">
            <svg width="15" height="14" viewBox="0 0 15 14" fill="none" stroke="#b5b5b5" strokeWidth="2"><path d="M14 5H6C2.500 5 1 7 1 9s1.500 3.500 4 3.500M9.500 0.500L14 5l-4.500 4.500" /></svg>
          </IconBtn>
          <IconBtn aria-label="恢复列表" $w={12}><Caret c="#b8b8b8" /></IconBtn>
        </QuickItem>
        <QuickItem>
          <IconBtn aria-label="撤消">
            <svg width="15" height="14" viewBox="0 0 15 14" fill="none" stroke="#3f76b5" strokeWidth="2.200"><path d="M1.500 5H9c3.500 0 5 2 5 4s-1.500 4-4 4M5.500 .5L1.500 5l4 4.500" /></svg>
          </IconBtn>
          <IconBtn aria-label="撤消列表" $w={12}><Caret c="#555" /></IconBtn>
        </QuickItem>
        <QuickItem>
          <IconBtn aria-label="快速打印">
            <svg width="17" height="17" viewBox="0 0 17 17" fill="#eee" stroke="#aaa"><path d="M.5.500h6l4 4v9H.5z" /><path d="M6.500 6.500h6v3h-6z" /><path d="M5.500 9.500h10v5h-10z" fill="#aaa" /><path d="M8.500 12.500h5v4h-5z" fill="#fff" /></svg>
          </IconBtn>
        </QuickItem>
        <QuickItem>
          <IconBtn aria-label="打印预览">
            <svg width="15" height="17" viewBox="0 0 15 17" fill="#fff" stroke="#666"><path d="M.5.500h8l4 4v11H.5z" /><path d="M8.500.500v4h4" /><circle cx="7" cy="9" r="3.300" strokeWidth="1.600" /><path d="M9.500 11.500l4 4" strokeWidth="2.200" /></svg>
          </IconBtn>
        </QuickItem>
        <QuickItem>
          <IconBtn aria-label="自定义快速访问工具栏" $w={20}>
            <svg width="6" height="7" viewBox="0 0 6 7"><path d="M0 0h6v1H0zM0 3h6L3 6.500z" fill="#fafafa" /></svg>
          </IconBtn>
        </QuickItem>
      </Quick>

      <FormulaRow>
        <Boxed $w={124}>
          <input aria-label="名称框" defaultValue="图表 4" />
          <CaretOver $right={5}><Caret w={8} /></CaretOver>
        </Boxed>
        <Dots><svg width="2" height="12" viewBox="0 0 2 12"><path d="M0 0h2v2H0zM0 5h2v2H0zM0 10h2v2H0z" fill="#aaa" /></svg></Dots>
        <Boxed $w={110}>
          <IconBtn aria-label="取消" $w={36}><svg width="12" height="11" viewBox="0 0 12 11"><path d="M1 1l10 9M11 1L1 10" stroke="#b8b8b8" strokeWidth="1.700" /></svg></IconBtn>
          <IconBtn aria-label="输入" $w={36}><svg width="13" height="11" viewBox="0 0 13 11"><path d="M1 6l4 4 7-9" fill="none" stroke="#b8b8b8" strokeWidth="2" /></svg></IconBtn>
          <IconBtn aria-label="插入函数" $w={36}><svg width="14" height="15" viewBox="0 0 14 15"><Fx x={1} y={11} size={15} c="#555" /></svg></IconBtn>
        </Boxed>
        <FormulaBox>
          <input aria-label="编辑栏" />
          <CaretOver $right={2}><svg width="8" height="6" viewBox="0 0 8 6"><path d="M1 1l3 3 3-3" fill="none" stroke="#bbb" strokeWidth="2" /></svg></CaretOver>
        </FormulaBox>
      </FormulaRow>

      <Body>
        <Left>
          <SheetRow>
            <SheetView>
              <SheetGrid />
              <SlicerBox title="班级" items={['1班', '2班', '3班']} x={570} w={163} line="#ed7d31" fill="#f8cbad" />
              <SlicerBox title="科目" items={['数学', '英语', '语文']} x={795} w={160} line="#5b9bd5" fill="#bdd7ee" />
              <Chart />
              <ChartTool aria-label="图表元素" $y={303}><svg width="14" height="14" viewBox="0 0 14 14"><path d="M5 0h4v5h5v4H9v5H5V9H0V5h5z" fill="#6aa78c" /></svg></ChartTool>
              <ChartTool aria-label="图表样式" $y={341}>
                <svg width="18" height="17" viewBox="0 0 18 17"><path d="M18 0v4l-6 6-3-2.500z" fill="#666" /><path d="M8 8l3.500 3" stroke="#fff" /><path d="M7 9c2 0 4 2 3.500 4-1 3.500-5 4-10.500 4 3-1.500 3-3 3.500-5 .5-2 1.500-3 3.500-3z" fill="#3f76b5" /><path d="M6.500 10.500c1.500 0 2.500 1 2.500 2" stroke="#fff" fill="none" /></svg>
              </ChartTool>
              <Pointer width="13" height="20" viewBox="0 0 13 20"><path d="M1 1v16l3.700-3.500L7.500 19l2.300-1-2.500-5.500H12z" fill="#fff" stroke="#112" /></Pointer>
            </SheetView>
            <VScroll>
              <ScrollBtn aria-label="向上滚动"><svg width="7" height="4" viewBox="0 0 8 4"><path d="M0 4h8L4 0z" fill="#666" /></svg></ScrollBtn>
              <Span $n={247} /><Span $n={272} $thumb /><Span $n={201} />
              <ScrollBtn aria-label="向下滚动"><Caret w={7} /></ScrollBtn>
            </VScroll>
          </SheetRow>
          <TabBar>
            <TabNav>
              <IconBtn aria-label="上一张工作表"><svg width="4" height="8" viewBox="0 0 4 8"><path d="M4 0v8L0 4z" fill="#c0c0c0" /></svg></IconBtn>
              <IconBtn aria-label="下一张工作表"><svg width="4" height="8" viewBox="0 0 4 8"><path d="M0 0v8l4-4z" fill="#c0c0c0" /></svg></IconBtn>
            </TabNav>
            <SheetTab $on>成绩表</SheetTab>
            <SheetTab>员工信息</SheetTab>
            <SheetTab>田字格</SheetTab>
            <SheetTab $bg="#bdd7ee">XXX公司销售额</SheetTab>
            <SheetTab $bg="#f4b084">课程表</SheetTab>
            <SheetTab>Sheet5</SheetTab>
            <AddTab aria-label="新工作表"><svg width="16" height="16" viewBox="0 0 16 16" fill="none" stroke="#888"><circle cx="8" cy="8" r="7.400" /><path d="M8 4v8M4 8h8" stroke="#666" strokeWidth="2" /></svg></AddTab>
            <Push />
            <ScrollArea>
              <Dots><svg width="2" height="10" viewBox="0 0 2 10"><path d="M0 0h2v2H0zM0 4h2v2H0zM0 8h2v2H0z" fill="#aaa" /></svg></Dots>
              <HScroll>
                <ScrollBtn aria-label="向左滚动"><svg width="4" height="8" viewBox="0 0 4 8"><path d="M4 0v8L0 4z" fill="#555" /></svg></ScrollBtn>
                <Span $n={315} $thumb /><Span $n={204} />
                <ScrollBtn aria-label="向右滚动"><svg width="4" height="8" viewBox="0 0 4 8"><path d="M0 0v8l4-4z" fill="#555" /></svg></ScrollBtn>
                <Ime>
                  EN
                  <svg width="11" height="12" viewBox="0 0 11 12"><path d="M5 .700c4.500 1.500 6.500 6 3.500 10-2.500 1-5 .5-7.500-1C5.500 9 6.500 5 5 .700z" fill="none" stroke="#333" /></svg>
                  简
                </Ime>
              </HScroll>
            </ScrollArea>
          </TabBar>
        </Left>

        <Pane>
          <PaneTop>
            <h2>数据透视图字段</h2>
            <IconBtn aria-label="任务窗格选项" $w={9}><Caret w={9} /></IconBtn>
            <IconBtn aria-label="关闭窗格" $w={10}><svg width="10" height="10" viewBox="0 0 10 10"><path d="M1 1l8 8M9 1L1 9" stroke="#666" strokeWidth="2" /></svg></IconBtn>
          </PaneTop>
          <PaneRow>
            <span>选择要添加到报表的字段:</span>
            <GearBtn aria-label="工具">
              <svg width="14" height="14" viewBox="0 0 14 14" stroke="#999" fill="none"><circle cx="7" cy="7" r="3.600" strokeWidth="2.600" /><path d="M7 .5v2M7 11.500v2M1.400 3.700l1.800 1M10.800 9.300l1.800 1M12.600 3.700l-1.800 1M3.200 9.300l-1.800 1" strokeWidth="3" /></svg>
              <Caret w={7} />
            </GearBtn>
          </PaneRow>
          <Search>
            <input placeholder="搜索" aria-label="搜索" />
            <svg width="13" height="13" viewBox="0 0 13 13" fill="none" stroke="#3f76b5"><circle cx="8" cy="5" r="4" strokeWidth="1.600" /><path d="M5 8l-4.500 4.500" strokeWidth="2.400" /></svg>
          </Search>
          <FieldList>
            {['班级', '科目', '平均分'].map(t => (
              <Check key={t} $bold><input type="checkbox" defaultChecked />{t}</Check>
            ))}
          </FieldList>
          <DragLabel>在以下区域间拖动字段:</DragLabel>
          <Zones>
            <ZonePart title="筛选器" icon={<svg width="11" height="12" viewBox="0 0 11 12"><path d="M0 0h11v2L7 6v6H4V6L0 2z" fill="#999" /></svg>} />
            <ZonePart right title="图例(系列)" value="科目" icon={<svg width="10" height="11" viewBox="0 0 10 11"><path d="M0 0h3v11H0zM4 0h1v11H4zM6.500 0h1v11h-1zM9 0h1v11H9z" fill="#999" /></svg>} />
            <ZonePart last title="轴(类别)" value="班级" icon={<svg width="11" height="10" viewBox="0 0 11 10"><path d="M0 0h11v3H0zM0 4h11v1H0zM0 6.500h11v1H0zM0 9h11v1H0z" fill="#999" /></svg>} />
            <ZonePart right last title="值" value="求和项:平均分" icon={<svg width="10" height="11" viewBox="0 0 10 11"><path d="M9 2.500V.700H1L5 5.500 1 10.200h8V8.500" fill="none" stroke="#999" strokeWidth="1.300" /></svg>} />
          </Zones>
          <PaneFoot>
            <Check><input type="checkbox" />推迟布局更新</Check>
            <UpdateBtn disabled>更新</UpdateBtn>
          </PaneFoot>
        </Pane>
      </Body>

      <Status>
        <StatusText>就绪</StatusText>
        <StatusText>数字</StatusText>
        <svg width="13" height="13" viewBox="0 0 13 13"><circle cx="3" cy="3" r="3" fill="#777" /><path d="M6 1h7v3H6z" fill="#777" /><path d="M1.500 6v6.500h11V4" fill="none" stroke="#999" /><path d="M3 7h2M6 7h2M9 7h2M3 9h2M6 9h2M9 9h2M3 11h2M6 11h2M9 11h2" stroke="#777" /></svg>
        <Push />
        <ViewBtn $on aria-label="普通"><svg width="13" height="13" viewBox="0 0 13 13"><path d="M.5.500h12v12H.5zM.5 4.500h12M.5 8.500h12M4.500.500v12M8.500.500v12" fill="none" stroke="#666" /></svg></ViewBtn>
        <ViewBtn aria-label="页面布局"><svg width="14" height="13" viewBox="0 0 14 13" fill="none" stroke="#666"><path d="M.5.500h13v12H.5zM3.500 2.500h7v8h-7zM5 4.500h4M5 6.500h4M5 8.500h4" /></svg></ViewBtn>
        <ViewBtn aria-label="分页预览"><svg width="14" height="13" viewBox="0 0 14 13" fill="none" stroke="#666"><path d="M.5.500h13v12H.5zM4.500.500v7h5v-7" /></svg></ViewBtn>
        <IconBtn aria-label="缩小" $w={12}><svg width="6" height="2" viewBox="0 0 6 2"><path d="M0 0h6v2H0z" fill="#555" /></svg></IconBtn>
        <Zoom type="range" aria-label="缩放" min={0} max={100} defaultValue={40} />
        <IconBtn aria-label="放大" $w={8}><svg width="8" height="8" viewBox="0 0 8 8"><path d="M3 0h2v3h3v2H5v3H3V5H0V3h3z" fill="#555" /></svg></IconBtn>
        <Percent>80%</Percent>
      </Status>

      <Watermark>
        <svg width="44" height="42" viewBox="0 0 44 42">
          <path d="M44 1C28 0 10 6 2 18c-4 7-2 14 4 16-4-8 2-16 12-20C26 10 36 8 44 1z" fill="#3f8fd6" />
          <path d="M36 6c-12 4-22 9-24 16-1 6 5 8 10 5-6-1-5-6 0-10 4-4 10-6 14-11z" fill="#7fc4f0" />
          <path d="M26 15c8-1 15 2 14 9-1 8-16 16-34 17 12-4 24-9 27-15 2-6-2-9-7-11z" fill="#5cb878" />
          <path d="M31 18c3 4 0 9-6 12-7 4-15 7-22 9 12-1 26-5 32-11 4-5 1-9-4-10z" fill="#c8d84a" />
        </svg>
        <MarkText><div>极光下载站</div><p>www.xz7.com</p></MarkText>
      </Watermark>
    </Window>
  );
}
